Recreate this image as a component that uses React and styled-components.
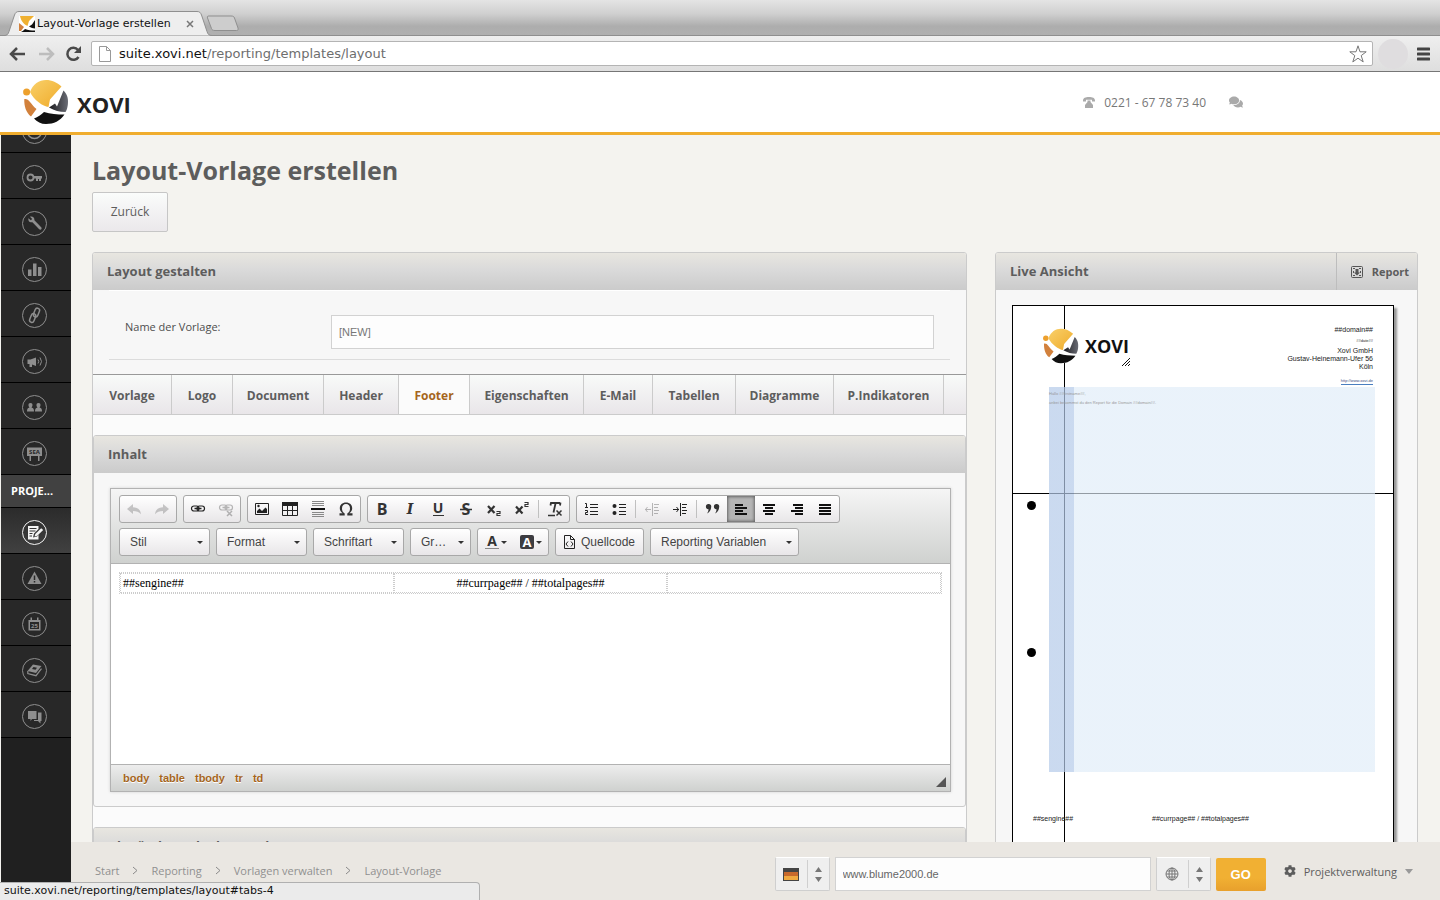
import styled, { createGlobalStyle, css } from "styled-components";
import { FaComments, FaCog } from "react-icons/fa";

const GlobalStyle = createGlobalStyle`
  * {
    box-sizing: border-box;
  }
  body {
    margin: 0;
    font-family: "Open Sans", "Noto Sans", sans-serif;
    font-size: 11px;
    color: #5d5d5d;
    background: #f4f3ef;
  }
  button, input, select {
    font-family: inherit;
    margin: 0;
    outline: none;
  }
  a {
    color: inherit;
    text-decoration: none;
  }
`;

const ui = `"DejaVu Sans", "Noto Sans", sans-serif`;
const arial = `"Liberation Sans", Arial, sans-serif`;

const Window = styled.div`
  position: relative;
  display: flex;
  flex-direction: column;
  height: 100vh;
  overflow: hidden;
`;

/* browser chrome */

const TabStrip = styled.div`
  display: flex;
  align-items: flex-end;
  height: 36px;
  flex: none;
  padding-left: 4px;
  background: linear-gradient(#e4e4e4, #cfcfcf 40%, #adadad 75%, #b0b0b0);
  border-bottom: 1px solid #8f8f8f;
  font-family: ${ui};
`;

const BrowserTab = styled.div`
  position: relative;
  display: flex;
  align-items: center;
  width: 206px;
  height: 25px;
  margin-bottom: -1px;
  padding: 0 14px 0 15px;
  color: #111;
  font-size: 11px;
`;

const TabShape = styled.svg`
  position: absolute;
  left: 0;
  top: 0;
`;

const TabLabel = styled.span`
  position: relative;
  flex: 1;
  padding-left: 2px;
  white-space: nowrap;
`;

const TabIcon = styled.svg`
  position: relative;
`;

const TabClose = styled.button`
  position: relative;
  display: flex;
  padding: 0;
  margin-right: 2px;
  border: none;
  background: none;
`;

const AddTab = styled.button`
  display: flex;
  height: 20px;
  margin-left: -4px;
  padding: 0;
  border: none;
  background: none;
`;

const NavBar = styled.div`
  display: flex;
  align-items: center;
  gap: 9px;
  flex: none;
  height: 36px;
  padding: 0 10px 0 8px;
  background: linear-gradient(#efefef, #dedede);
  border-bottom: 1px solid #767676;
`;

const NavButton = styled.button`
  display: flex;
  padding: 0;
  margin-right: ${(p) => p.$gap || 0}px;
  border: none;
  background: none;
`;

const UrlBox = styled.div`
  display: flex;
  align-items: center;
  flex: 1;
  height: 25px;
  padding: 0 5px 0 7px;
  background: #fff;
  border: 1px solid #b4b4b4;
  border-radius: 2px;
  font-family: ${ui};
  font-size: 13px;
  color: #6e6e6e;
`;

const UrlText = styled.span`
  flex: 1;
  padding-left: 8px;

  b {
    color: #111;
    font-weight: normal;
  }
`;

const Avatar = styled.div`
  width: 30px;
  height: 30px;
  margin-left: -4px;
  border-radius: 50%;
  background: #dfdddf;
`;

const StatusBubble = styled.div`
  position: absolute;
  left: 0;
  bottom: 0;
  width: 480px;
  height: 18px;
  padding: 0 4px;
  background: #ebebeb;
  border: 1px solid #b0b0b0;
  border-bottom: none;
  border-left: none;
  border-radius: 0 4px 0 0;
  color: #111;
  font-family: ${ui};
  font-size: 11px;
  line-height: 16px;
`;

/* header of the suite */

const Header = styled.header`
  display: flex;
  align-items: center;
  justify-content: space-between;
  flex: none;
  height: 63px;
  padding: 0 197px 0 23px;
  background: #fff;
  border-bottom: 3px solid #f0ad2e;
`;

const Brand = styled.a`
  display: flex;
  align-items: center;
  gap: 8px;
  color: #222;
  font-size: 22px;
  font-weight: bold;
  line-height: 30px;
`;

const Wordmark = styled.span`
  padding-top: 4px;
`;

const Contact = styled.div`
  display: flex;
  align-items: center;
  gap: 9px;
  color: #777;
  font-size: 12px;

  a + svg {
    margin-left: 14px;
  }
`;

const Body = styled.div`
  display: flex;
  flex: 1;
  min-height: 0;
`;

/* sidebar */

const Sidebar = styled.nav`
  width: 71px;
  flex: none;
  overflow: hidden;
  background: #202020;
  border-left: 1px solid #f4f3ef;
`;

const SideList = styled.div`
  margin-top: -28px;
`;

const SideItem = styled.a`
  display: flex;
  align-items: center;
  height: 46px;
  padding: 4px 0 0 20px;
  background: ${(p) => (p.$active ? "linear-gradient(#2b2b2b, #414141)" : "#282828")};
  border-bottom: 1px solid #000;
  color: ${(p) => (p.$active ? "#f4f4f4" : "#8e8e8e")};
`;

const SideLabel = styled.div`
  height: 33px;
  padding-left: 10px;
  background: #414141;
  border-bottom: 1px solid #000;
  color: #fff;
  font-size: 11px;
  font-weight: bold;
  line-height: 32px;
`;

/* main column */

const Main = styled.div`
  display: flex;
  flex-direction: column;
  flex: 1;
  min-width: 0;
`;

const Content = styled.main`
  flex: 1;
  min-height: 0;
  overflow: hidden;
  padding: 17px 22px 0 21px;
  background: #f4f3ef;
`;

const Title = styled.h1`
  margin: 0 0 4px;
  color: #5d5d5d;
  font-size: 25px;
  line-height: 36px;
`;

const BackButton = styled.button`
  width: 76px;
  height: 40px;
  padding-bottom: 2px;
  border: 1px solid #c6c6c6;
  border-radius: 2px;
  background: linear-gradient(#fafcfb, #ebe8eb);
  color: #5d5d5d;
  font-size: 12px;
`;

const Columns = styled.div`
  display: grid;
  grid-template-columns: minmax(0, 875fr) minmax(0, 423fr);
  align-items: start;
  gap: 28px;
  margin-top: 20px;
`;

const Panel = styled.section`
  border: 1px solid #cbcbcb;
  border-radius: 3px;
  background: ${(p) => (p.$light ? "#fbfbfb" : "#f7f7f7")};
  margin-bottom: ${(p) => (p.$nested ? 20 : 0)}px;
`;

const PanelHead = styled.div`
  display: flex;
  align-items: stretch;
  justify-content: space-between;
  height: 37px;
  padding-left: 14px;
  background: linear-gradient(#e8e6e0, #dadada 45%, #cbcbcb);
  border-radius: 2px 2px 0 0;
`;

const PanelTitle = styled.h2`
  margin: 0;
  font-size: 13px;
  font-weight: bold;
  line-height: 36px;
  white-space: nowrap;
`;

const ReportButton = styled.button`
  display: flex;
  align-items: center;
  gap: 9px;
  padding: 0 8px 0 14px;
  border: none;
  border-left: 1px solid #bdbdbd;
  background: none;
  color: #5d5d5d;
  font-size: 11px;
  font-weight: bold;
`;

const NameRow = styled.div`
  display: grid;
  grid-template-columns: 206px 1fr;
  margin: 0 16px;
  padding: 24px 16px 10px;
  border-top: 1px solid #fff;
  border-bottom: 1px solid #dcdcdc;
  background: #f7f7f7;

  label {
    font-size: 11px;
    line-height: 24px;
    color: #4e4e4e;
  }
`;

const NameInput = styled.input`
  height: 34px;
  padding: 0 7px;
  border: 1px solid #d2d2d2;
  background: #fdfdfd;
  color: #777;
  font-family: ${arial};
  font-size: 11px;
`;

const FormArea = styled.div`
  padding-bottom: 14px;
  background: #f7f7f7;
`;

const Tabs = styled.div`
  display: flex;
  height: 41px;
  border-top: 1px solid #999;
  border-bottom: 1px solid #cbcbcb;
  background: linear-gradient(#f8faf9, #e9e6e9);
`;

const Tab = styled.button`
  width: ${(p) => p.$width}px;
  padding: 2px 0 0;
  border: none;
  border-right: 1px solid #cbcbcb;
  background: none;
  color: #5d5d5d;
  font-size: 12px;
  font-weight: bold;
  white-space: nowrap;
  ${(p) =>
    p.$active &&
    css`
      background: #fbfbfb;
      color: #a5651c;
    `}
`;

const TabBody = styled.div`
  padding-top: 20px;
`;

/* rich text editor */

const Editor = styled.div`
  margin: 15px 14px 14px 16px;
  border: 1px solid #b2b2b2;
  background: #fff;
  box-shadow: 0 0 3px rgba(0, 0, 0, 0.15);
  font-family: ${arial};
`;

const EditorBar = styled.div`
  display: flex;
  flex-direction: column;
  gap: 5px;
  height: 75px;
  padding: 6px 8px;
  border-bottom: 1px solid #b2b2b2;
  background: linear-gradient(#f5f5f5, #cfd1cf);
`;

const BarRow = styled.div`
  display: flex;
  gap: 6px;
`;

const group = css`
  height: 28px;
  border: 1px solid #a8a8a8;
  border-radius: 3px;
  background: linear-gradient(#fff, #e8e6e8);
`;

const Group = styled.div`
  ${group}
  display: flex;
  align-items: center;
`;

const Tool = styled.button`
  display: flex;
  align-items: center;
  justify-content: center;
  width: ${(p) => p.$width || 28}px;
  height: 26px;
  padding: 0;
  border: none;
  background: none;
  color: #222;
  opacity: ${(p) => (p.disabled ? 0.3 : 1)};
  ${(p) =>
    p.$on &&
    css`
      background: #b5b5b5;
      box-shadow: inset 0 0 3px 1px rgba(0, 0, 0, 0.45);
    `}
`;

const Separator = styled.span`
  width: 1px;
  height: 18px;
  margin: 0 2px;
  background: #c0c0c0;
`;

const Combo = styled.div`
  ${group}
  position: relative;
  width: ${(p) => p.$width}px;

  select {
    width: 100%;
    height: 26px;
    padding: 0 20px 0 10px;
    border: none;
    appearance: none;
    background: none;
    color: #444;
    font-family: ${arial};
    font-size: 12px;
  }
`;

const ComboCaret = styled.svg`
  position: absolute;
  right: 6px;
  top: 12px;
  pointer-events: none;
`;

const SourceButton = styled.button`
  ${group}
  display: flex;
  align-items: center;
  gap: 4px;
  width: 89px;
  padding: 0 5px;
  color: #444;
  font-family: ${arial};
  font-size: 12px;
`;

const EditArea = styled.div`
  height: 200px;
  padding: 8px;
`;

const DocTable = styled.table`
  width: 100%;
  table-layout: fixed;
  border: 1px dotted #ccc;
  border-spacing: 0;
  color: #000;
  font-family: "Liberation Serif", "Times New Roman", serif;
  font-size: 12px;
  line-height: 16px;

  td {
    height: 20px;
    padding: 1px 2px;
    border: 1px dotted #ccc;
  }
  td:nth-child(2) {
    text-align: center;
  }
`;

const PathBar = styled.div`
  display: flex;
  align-items: center;
  gap: 10px;
  height: 27px;
  padding: 0 4px 0 12px;
  border-top: 1px solid #b2b2b2;
  background: linear-gradient(#ededed, #cfd1cf);
  color: #a5651c;
  font-size: 11px;
  font-weight: bold;
  text-shadow: 0 1px 0 #fff;

  svg {
    margin-left: auto;
    align-self: flex-end;
    margin-bottom: 4px;
  }
`;

/* live preview: a free canvas, the parts sit where the template puts them */

const Sheet = styled.div`
  position: relative;
  height: 600px;
  margin: 15px 23px 0 16px;
  border: 1px solid #000;
  background: #fff;
  box-shadow: 3px 3px 2px #999;
  color: #222;
  font-family: ${arial};
  font-size: 7px;
  line-height: 8px;
`;

const Guide = styled.div`
  position: absolute;
  background: #000;
  ${(p) =>
    p.$vertical
      ? css`
          left: 51px;
          top: 0;
          bottom: 0;
          width: 1px;
        `
      : css`
          top: 187px;
          left: 0;
          right: 0;
          height: 1px;
        `}
`;

const SheetLogo = styled.div`
  position: absolute;
  left: 30px;
  top: 21px;
  display: flex;
  align-items: center;
  gap: 6px;
  color: #111;
  font-family: "Open Sans", sans-serif;
  font-size: 18px;
  font-weight: bold;
  line-height: 38px;
`;

const SheetGrip = styled.svg`
  position: absolute;
  left: 109px;
  top: 52px;
`;

const Address = styled.address`
  position: absolute;
  right: 20px;
  top: 20px;
  font-style: normal;
  text-align: right;

  p {
    margin: 0;
  }
  small {
    display: block;
    font-size: 4px;
    line-height: 13px;
  }
  a {
    display: inline-block;
    margin-top: 6px;
    border-bottom: 1px solid #4a7fc0;
    color: #3a4a80;
    font-size: 4px;
    line-height: 7px;
  }
`;

const BodyZone = styled.div`
  position: absolute;
  left: 36px;
  right: 18px;
  top: 81px;
  height: 385px;
  padding-top: 2px;
  background: linear-gradient(
    to right,
    rgba(180, 202, 233, 0.7) 25px,
    rgba(223, 236, 248, 0.66) 25px
  );
  color: #999;
  font-size: 4px;
  line-height: 9px;

  p {
    margin: 0;
  }
`;

const PunchHole = styled.div`
  position: absolute;
  left: 14px;
  top: ${(p) => p.$top}px;
  width: 9px;
  height: 9px;
  border-radius: 50%;
  background: #000;
`;

const FooterField = styled.div`
  position: absolute;
  left: ${(p) => p.$left}px;
  top: 509px;
`;

/* footer */

const Footer = styled.footer`
  display: flex;
  align-items: center;
  justify-content: space-between;
  flex: none;
  height: 58px;
  padding: 0 27px 0 24px;
  background: #eae7e2;
`;

const Crumbs = styled.nav`
  display: flex;
  align-items: center;
  gap: 13px;
  padding-bottom: 2px;
  color: #909090;
  font-size: 11px;
`;

const Project = styled.form`
  display: flex;
  align-items: center;
  gap: 5px;
  padding-top: 6px;
`;

const IconSelect = styled.label`
  position: relative;
  display: flex;
  align-items: center;
  width: 55px;
  height: 34px;
  border: 1px solid #cfcfcf;
  border-top-color: #fff;
  border-radius: 2px;
  background: #efefef;
  color: #777;

  select {
    position: absolute;
    inset: 0;
    opacity: 0;
  }
`;

const IconCell = styled.span`
  display: flex;
  align-items: center;
  justify-content: center;
  flex: 1;
  height: 28px;
  border-right: 1px solid #cfcfcf;
`;

const ArrowCell = styled.span`
  display: flex;
  justify-content: center;
  width: 21px;
`;

const DomainInput = styled.input`
  width: 316px;
  height: 34px;
  padding: 0 7px;
  border: 1px solid #d2d2d2;
  background: #fdfdfd;
  color: #666;
  font-family: ${arial};
  font-size: 11px;
`;

const GoButton = styled.button`
  width: 50px;
  height: 33px;
  border: none;
  border-radius: 2px;
  background: linear-gradient(#f1b033 60%, #e8a02c);
  color: #fff;
  font-family: ${arial};
  font-size: 13px;
  font-weight: bold;
`;

const ManageButton = styled.button`
  display: flex;
  align-items: center;
  gap: 8px;
  margin-left: 13px;
  padding: 0 0 6px;
  border: none;
  background: none;
  color: #5d5d5d;
  font-size: 11px;
`;

const Globe = ({ size, flat }) => (
  <svg width={size} height={size} viewBox="0 0 46 46">
    <defs>
      <linearGradient id="sun" x1="0" y1="0" x2="1" y2="1">
        <stop offset="0" stopColor="#f9d06a" />
        <stop offset="1" stopColor="#efab2a" />
      </linearGradient>
      <linearGradient id="steel" x1="0" y1="0" x2="1" y2="0">
        <stop offset="0" stopColor="#1d1d20" />
        <stop offset="1" stopColor={flat ? "#6b5450" : "#6a6c75"} />
      </linearGradient>
    </defs>
    <circle cx="23" cy="23" r="22" fill="#fff" />
    <circle cx="3.6" cy="13" r="3.5" fill="#eda02d" />
    <path d="M7 13C10 5 16 1 23 1c6 0 11 2.500 15.500 6.500L27 20.500l-1.500 7.500C20 27.500 11 21 7 13z" fill="url(#sun)" />
    <path d="M1.300 20c2-.5 4 .5 5.700 3 2 2.500 4 5 6.500 7l-5.500 7.500C3 33.500 1 27 1.300 20z" fill="#d2813c" />
    <path d="M40.500 11.500C45 16 45.500 21 44.800 26c-.4 3-1 5-2.300 7-6 0-11-1.500-16.500-4.500l6-4 2 3z" fill="url(#steel)" />
    <path d="M11 39.500c4-1.500 7-3.500 10-6.500 6.500 2 13 2.500 20.500 2.500C37 42 31 45 23 45c-5 0-9-2-12-5.500z" fill="#111" />
  </svg>
);

const Ring = ({ children }) => (
  <svg width="27" height="27" viewBox="0 0 27 27" fill="none">
    <circle cx="13.500" cy="13.500" r="12" stroke="currentColor" strokeWidth="1" />
    {children}
  </svg>
);

const f = { fill: "currentColor" };
const s = { stroke: "currentColor", strokeWidth: 1.500 };

const sideIcons = {
  gauge: <circle cx="13.500" cy="13.500" r="7" {...s} />,
  key: (
    <>
      <circle cx="9.500" cy="13.500" r="3" {...s} strokeWidth="1.800" />
      <path d="M13 12h8v2.500h-1V17h-2v-2h-1v2h-2v-2.500h-2z" {...f} />
    </>
  ),
  wrench: (
    <path d="M7.500 8.200l2.300 2 1.400-1.200-2.200-2.300c2.500-.8 4.800 1 4.400 3.600l6.800 7c1.300 1.500-.6 3.300-2 2l-6.800-7.100c-2.500.7-4.700-1.400-3.900-4z" {...f} />
  ),
  bars: <path d="M7 13.500h3.500V20H7zM12 7.500h3.500V20H12zM17 11h3.500v9H17z" {...f} />,
  link: (
    <g transform="rotate(22 13.500 13.500)" {...s}>
      <rect x="12" y="5.500" width="4.500" height="9" rx="2.200" />
      <rect x="10.500" y="12" width="4.500" height="9" rx="2.200" />
    </g>
  ),
  horn: (
    <>
      <path d="M6.500 11.500h3L15 9.500v8.500l-4-1.500V19H8.500v-3h-2z" {...f} />
      <path d="M17 11.500q1.500 2 0 4M19 9.500q3 4 0 8" {...s} strokeWidth="1" />
    </>
  ),
  people: (
    <>
      <path d="M9.500 9c3 0 2 3.500 1 4.500 2 .5 2.500 1.500 2.500 4H6c0-2.500.5-3.500 2.500-4C7.500 12.500 6.500 9 9.500 9z" {...f} />
      <path d="M17.500 9c3 0 2 3.500 1 4.500 2 .5 2.500 1.500 2.500 4h-7c0-2.500.5-3.500 2.500-4-1-1-2-4.500 1-4.500z" {...f} />
    </>
  ),
  sea: (
    <>
      <path d="M6 7.500h15v8.500H6z M8.500 16h1.500v5H8.500zM17 16h1.500v5H17z" {...f} />
      <text x="13.500" y="14.200" textAnchor="middle" fontSize="6" fontWeight="bold" fill="#282828">SEA</text>
    </>
  ),
  report: (
    <>
      <path d="M7 7h10.500v3L13 14.500 12 18.500l4-1 1.500-1.500v4.500H7z" {...f} />
      <path d="M8.500 9.500h7M8.500 12h6M8.500 14.500h3M8.500 17h2.500" stroke="#333" />
      <path d="M13.500 17.500l.8-2.600 5.900-5.700 2 1.900-5.900 5.700z" {...f} />
    </>
  ),
  warning: (
    <>
      <path d="M13.500 6.500L20.500 19h-14z" {...f} />
      <path d="M13.500 10.500v4.500M13.500 16v1.500" stroke="#282828" strokeWidth="1.500" />
    </>
  ),
  calendar: (
    <>
      <path d="M7.500 9h12v10.500h-12zM9.500 6.500H11V9H9.500zM16 6.500h1.500V9H16z" {...f} />
      <path d="M9 11h9v7H9z" fill="#282828" />
      <text x="13.500" y="17" textAnchor="middle" fontSize="6" fontWeight="bold" {...f}>25</text>
    </>
  ),
  book: (
    <>
      <path d="M12 7.500l8.500 1.500-5.500 7-8.500-2z" {...f} />
      <path d="M6.800 14v2.500l8.200 2.200 5.500-7" {...s} strokeWidth="1.200" />
      <path d="M12.500 10l3.500.7-1.500 2-3.500-.7z" fill="#282828" />
    </>
  ),
  chat: (
    <>
      <path d="M7 8h8.500v8H11l-1.500 2V16H7z" {...f} />
      <path d="M17 9.500h3.500v8.500h-1v2.500L17 18h-4v-1h4z" {...f} />
    </>
  ),
};

const topItems = ["gauge", "key", "wrench", "bars", "link", "horn", "people", "sea"];
const projectItems = ["report", "warning", "calendar", "book", "chat"];

const tabs = [
  ["Vorlage", 79],
  ["Logo", 61],
  ["Document", 91],
  ["Header", 75],
  ["Footer", 71],
  ["Eigenschaften", 114],
  ["E-Mail", 69],
  ["Tabellen", 83],
  ["Diagramme", 98],
  ["P.Indikatoren", 110],
];

const Glyph = ({ children, width = 16 }) => (
  <svg width={width} height="16" viewBox={`0 0 ${width} 16`} fill="none" overflow="visible">
    {children}
  </svg>
);

const letter = { fill: "#333", fontFamily: "Open Sans", fontWeight: "bold", textAnchor: "middle" };

const glyphs = {
  undo: <path d="M1 8l6-5v3.200c4 0 7.500 2 8 7-2-2.500-4.500-3.200-8-3.200v3z" fill="#555" />,
  redo: <path d="M15 8L9 3v3.200c-4 0-7.500 2-8 7 2-2.500 4.500-3.200 8-3.200v3z" fill="#555" />,
  link: (
    <>
      <rect x="1.500" y="5" width="7.500" height="5" rx="2.500" stroke="#222" strokeWidth="1.200" />
      <rect x="7" y="5" width="7.500" height="5" rx="2.500" stroke="#222" strokeWidth="1.200" />
      <path d="M4.500 7.500h7" stroke="#222" strokeWidth="1.500" />
    </>
  ),
  unlink: (
    <>
      <rect x="1.500" y="4" width="7.500" height="5" rx="2.500" stroke="#222" strokeWidth="1.200" />
      <rect x="7" y="4" width="7.500" height="5" rx="2.500" stroke="#222" strokeWidth="1.200" />
      <path d="M4.500 6.500h7M9 10l5 5M14 10l-5 5" stroke="#222" strokeWidth="1.500" />
    </>
  ),
  image: (
    <>
      <path d="M1.500 2.500h13v11h-13z" stroke="#222" />
      <path d="M3 12V10l2.500-2.500L8 10l3.500-3.500L13 8v4z" fill="#222" />
      <circle cx="4.500" cy="5" r="1.200" fill="#222" />
    </>
  ),
  table: (
    <>
      <path d="M0 1h16v4H0z" fill="#222" />
      <path d="M.5 2v12.500h15V2M.5 9.500h15M5.500 4v10M10.500 4v10" stroke="#222" />
    </>
  ),
  rule: (
    <>
      <path d="M2 .5h12M2 2.500h12M2 4.500h12M2 11.500h12M2 13.500h12M2 15.500h12" stroke="#888" />
      <path d="M1 8h14" stroke="#111" strokeWidth="2" />
    </>
  ),
  omega: (
    <path d="M1.500 14.500v-2.200h3.200C2.800 11 1.800 9.300 1.800 7.200 1.800 3.800 4.300 1.500 8 1.500s6.200 2.300 6.200 5.700c0 2.100-1 3.800-2.900 5.100h3.200v2.200H9.300v-2c1.900-1.200 2.700-2.900 2.700-5.100C12 4.600 10.500 2.900 8 2.900S4 4.600 4 7.400c0 2.200.8 3.900 2.700 5.100v2z" fill="#333" />
  ),
  bold: <text x="8" y="14" {...letter} fontSize="16">B</text>,
  italic: <text x="8" y="13" {...letter} fontFamily="DejaVu Serif" fontStyle="italic" fontSize="14">I</text>,
  underline: (
    <>
      <text x="8" y="12" {...letter} fontSize="14">U</text>
      <path d="M3 14.500h11" stroke="#333" />
    </>
  ),
  strike: (
    <>
      <text x="8" y="14" {...letter} fontSize="16">S</text>
      <path d="M2 8.500h12" stroke="#333" strokeWidth="1.500" />
    </>
  ),
  sub: (
    <>
      <path d="M2 5l6.500 7M8.500 5L2 12" stroke="#333" strokeWidth="2.200" />
      <path d="M10.500 10.500h3.500v2h-3v2h3.500" stroke="#333" strokeWidth="1.200" />
    </>
  ),
  sup: (
    <>
      <path d="M2 5.500l6.500 7M8.500 5.500L2 12.500" stroke="#333" strokeWidth="2.200" />
      <path d="M10.500 1.500h3.500v2h-3v2h3.500" stroke="#333" strokeWidth="1.200" />
    </>
  ),
  clear: (
    <>
      <path d="M3.500 2h9.500M8.500 2.500l-2 9M4 1.500L3.500 4.500M13.500 1.500L13 4.500" stroke="#333" strokeWidth="1.800" />
      <path d="M1 14.500h7M9.500 9.500l5 5M14.500 9.500l-5 5" stroke="#333" strokeWidth="1.500" />
    </>
  ),
  ol: (
    <>
      <path d="M7 3.500h8M7 6.500h8M7 10.500h8M7 13.500h8" stroke="#222" />
      <path d="M2 2.500h1.500V6.500M2 6.500h3M2 9.500h2.500v2H2.500v2H5" stroke="#222" />
    </>
  ),
  ul: (
    <>
      <path d="M8 3.500h7M8 6.500h7M8 10.500h7M8 13.500h7" stroke="#222" />
      <circle cx="3.500" cy="5" r="2" fill="#222" />
      <circle cx="3.500" cy="12" r="2" fill="#222" />
    </>
  ),
  outdent: (
    <path d="M8.500 2v13M10 3.500h5M10 6.500h4M10 9.500h5M10 12.500h4M1 8.500h6M3.500 6L1.500 8.500l2 2.500" stroke="#222" />
  ),
  indent: (
    <path d="M8.500 2v13M10 3.500h5M10 6.500h4M10 9.500h5M10 12.500h4M1 8.500h6M4.500 6l2 2.500-2 2.500" stroke="#222" />
  ),
  quote: (
    <path d="M3.500 3a2.500 2.500 0 0 1 2.700 3C6 9.500 4 11.500 2 12.500c1-1.500 1.500-2.800 1.500-4.300A2.600 2.600 0 0 1 3.500 3zM11.500 3a2.500 2.500 0 0 1 2.700 3c-.2 3.500-2.200 5.500-4.200 6.500 1-1.500 1.500-2.800 1.500-4.300a2.600 2.600 0 0 1 0-5.200z" fill="#333" />
  ),
  left: <path d="M2 4h8M2 7h12M2 10h8M2 13h12" stroke="#111" strokeWidth="2" />,
  center: <path d="M2 4h12M4 7h8M2 10h12M4 13h8" stroke="#111" strokeWidth="2" />,
  right: <path d="M4 4h10M6 7h8M2 10h12M6 13h8" stroke="#111" strokeWidth="2" />,
  justify: <path d="M2 4h12M2 7h12M2 10h12M2 13h12" stroke="#111" strokeWidth="2" />,
};

const toolGroups = [
  ["undo", "redo"],
  ["link", "unlink"],
  ["image", "table", "rule", "omega"],
  ["bold", "italic", "underline", "strike", "sub", "sup", "|", "clear"],
  ["ol", "ul", "|", "outdent", "indent", "|", "quote", "left", "center", "right", "justify"],
];

const disabledTools = ["undo", "redo", "unlink", "outdent"];

const Select = ({ label, width }) => (
  <Combo $width={width}>
    <select aria-label={label}>
      <option>{label}</option>
    </select>
    <ComboCaret width="6" height="3" viewBox="0 0 6 3">
      <path d="M0 0h6L3 3z" fill="#333" />
    </ComboCaret>
  </Combo>
);

const UpDown = () => (
  <ArrowCell>
    <svg width="7" height="15" viewBox="0 0 7 15">
      <path d="M3.500 0L7 5H0zM3.500 15L7 10H0z" fill="#777" />
    </svg>
  </ArrowCell>
);

const Chevron = () => (
  <svg width="6" height="9" viewBox="0 0 6 9">
    <path d="M1 1l4 3.500L1 8" fill="none" stroke="#8a8a8a" />
  </svg>
);

const Browser = () => (
  <>
    <TabStrip>
      <BrowserTab>
        <TabShape width="208" height="25" viewBox="0 0 208 25">
          <path d="M0 24.500c3 0 4-1 5-4L10.500 4C11.500 1.500 12.500.5 15 .5h178c2.500 0 3.500 1 4.500 3.500L203 20.500c1 3 2 4 5 4" fill="#eee" stroke="#8f8f8f" />
        </TabShape>
        <TabIcon width="16" height="16" viewBox="0 0 16 16">
          <path d="M0 0h16v16H0z" fill="#fff" />
          <path d="M1 0h14l-5 5-1.500 5C5 8.500 2 5 1 0z" fill="#efb030" />
          <path d="M0 7l5 4-3 4H0z" fill="#d2813c" />
          <path d="M16 4v8.500c-2 0-4-1-6-2l3-2zM2 16c2-1 3-2 4-3 3 1 6 1.500 10 1.500V16z" fill="#111" />
        </TabIcon>
        <TabLabel>Layout-Vorlage erstellen</TabLabel>
        <TabClose aria-label="Tab schließen">
          <svg width="8" height="8" viewBox="0 0 8 8">
            <path d="M1 1l6 6M7 1L1 7" stroke="#777" strokeWidth="1.500" />
          </svg>
        </TabClose>
      </BrowserTab>
      <AddTab aria-label="Neuer Tab">
        <svg width="33" height="17" viewBox="0 0 33 17">
          <path d="M3 1h22c2 0 3 .5 3.500 2L32 13c.5 1.500 0 2.500-1.500 2.500H9c-2 0-3-.5-3.500-2L1.500 3C1 1.500 1.500 1 3 1z" fill="#cdcdcd" stroke="#8f8f8f" />
        </svg>
      </AddTab>
    </TabStrip>
    <NavBar>
      <NavButton aria-label="Zurück" $gap={3}>
        <svg width="18" height="16" viewBox="0 0 18 16">
          <path d="M17 8H3M9 2L3 8l6 6" fill="none" stroke="#4a4a4a" strokeWidth="2.500" />
        </svg>
      </NavButton>
      <NavButton aria-label="Vorwärts">
        <svg width="18" height="16" viewBox="0 0 18 16">
          <path d="M1 8h14M9 2l6 6-6 6" fill="none" stroke="#bdbdbd" strokeWidth="2.500" />
        </svg>
      </NavButton>
      <NavButton aria-label="Neu laden">
        <svg width="17" height="16" viewBox="0 0 17 16">
          <path d="M13.500 11a6 6 0 1 1-.5-7" fill="none" stroke="#4a4a4a" strokeWidth="2.500" />
          <path d="M16 0v7H9z" fill="#4a4a4a" />
        </svg>
      </NavButton>
      <UrlBox>
        <svg width="12" height="16" viewBox="0 0 12 16">
          <path d="M.5.500h7l4 4v11H.5zM7.500.500v4h4" fill="#fff" stroke="#999" />
        </svg>
        <UrlText>
          <b>suite.xovi.net</b>/reporting/templates/layout
        </UrlText>
        <svg width="18" height="18" viewBox="0 0 18 18">
          <path d="M9 .8l2 6h6.200l-5 3.800 2 6.300L9 13.200l-5.200 3.700 2-6.300-5-3.800H7z" fill="#fff" stroke="#777" />
        </svg>
      </UrlBox>
      <Avatar />
      <NavButton aria-label="Menü">
        <svg width="13" height="14" viewBox="0 0 13 14">
          <path d="M1 2h11M1 7h11M1 12h11" stroke="#444" strokeWidth="3" strokeLinecap="round" />
        </svg>
      </NavButton>
    </NavBar>
  </>
);

const LayoutEditor = () => (
  <Editor>
    <EditorBar>
      <BarRow>
        {toolGroups.map((tools, i) => (
          <Group key={i}>
            {tools.map((name, j) =>
              name === "|" ? (
                <Separator key={j} />
              ) : (
                <Tool key={j} aria-label={name} $on={name === "left"} disabled={disabledTools.includes(name)}>
                  <Glyph>{glyphs[name]}</Glyph>
                </Tool>
              )
            )}
          </Group>
        ))}
      </BarRow>
      <BarRow>
        <Select label="Stil" width={91} />
        <Select label="Format" width={91} />
        <Select label="Schriftart" width={91} />
        <Select label="Gr…" width={61} />
        <Group>
          <Tool $width={35} aria-label="Textfarbe">
            <Glyph width={24}>
              <text x="8" y="12" {...letter} fontSize="14">A</text>
              <path d="M1 14.500h14" stroke="#888" />
              <path d="M17 7h6l-3 3z" fill="#333" />
            </Glyph>
          </Tool>
          <Tool $width={35} aria-label="Hintergrundfarbe">
            <Glyph width={24}>
              <rect x="1" y="1" width="14" height="14" rx="2" fill="#3c3c40" />
              <text x="8" y="13" {...letter} fontSize="13" fill="#fff">A</text>
              <path d="M17 7h6l-3 3z" fill="#333" />
            </Glyph>
          </Tool>
        </Group>
        <SourceButton>
          <Glyph>
            <path d="M3.500 1.500h6l4 4v9h-10zM9.500 1.500v4h4" stroke="#222" />
            <path d="M7 7.500L5 10l2 2.500M10 7.500l2 2.500-2 2.500" stroke="#222" />
          </Glyph>
          Quellcode
        </SourceButton>
        <Select label="Reporting Variablen" width={149} />
      </BarRow>
    </EditorBar>
    <EditArea>
      <DocTable>
        <tbody>
          <tr>
            <td>##sengine##</td>
            <td>##currpage## / ##totalpages##</td>
            <td />
          </tr>
        </tbody>
      </DocTable>
    </EditArea>
    <PathBar>
      {["body", "table", "tbody", "tr", "td"].map((tag) => (
        <a key={tag} href="#path">{tag}</a>
      ))}
      <svg width="10" height="10" viewBox="0 0 10 10">
        <path d="M10 0v10H0z" fill="#555" />
      </svg>
    </PathBar>
  </Editor>
);

const Preview = () => (
  <Panel>
    <PanelHead>
      <PanelTitle>Live Ansicht</PanelTitle>
      <ReportButton>
        <svg width="12" height="12" viewBox="0 0 12 12" fill="none">
          <rect x="0.500" y="0.500" width="11" height="11" rx="1" stroke="#555" />
          <path d="M2 2.500h2M8 2.500h2M2 9.500h2M8 9.500h2M2.500 5v2M9.500 5v2" stroke="#555" />
          <path d="M4.500 3v3.500H3L6 9.500l3-3H7.500V3z" fill="#555" />
        </svg>
        Report
      </ReportButton>
    </PanelHead>
    <Sheet>
      <Guide $vertical />
      <Guide />
      <SheetLogo>
        <Globe size={36} flat />
        XOVI
      </SheetLogo>
      <SheetGrip width="8" height="8" viewBox="0 0 8 8">
        <path d="M0 8l8-8M3 8l5-5M6 8l2-2" stroke="#111" />
      </SheetGrip>
      <Address>
        <p>##domain##</p>
        <small>##date##</small>
        <p>Xovi GmbH</p>
        <p>Gustav-Heinemann-Ufer 56</p>
        <p>Köln</p>
        <a href="#xovi">http://www.xovi.de</a>
      </Address>
      <BodyZone>
        <p>Hallo ##firstname##,</p>
        <p>anbei bekommst du den Report für die Domain ##domain##.</p>
      </BodyZone>
      <PunchHole $top={195} />
      <PunchHole $top={342} />
      <FooterField $left={20}>##sengine##</FooterField>
      <FooterField $left={139}>##currpage## / ##totalpages##</FooterField>
    </Sheet>
  </Panel>
);

const App = () => {
  return (
    <Window>
      <GlobalStyle />
      <Browser />
      <Header>
        <Brand href="#home">
          <Globe size={46} />
          <Wordmark>XOVI</Wordmark>
        </Brand>
        <Contact>
          <svg width="12" height="11" viewBox="0 0 12 11" fill="#aaa">
            <path d="M0 3.500C0 1 2.500 0 6 0s6 1 6 3.500V4.500H9V2.800H3V4.500H0zM4.500 3.500h3V5L10 8v3H2V8l2.500-3z" />
          </svg>
          <a href="#tel">0221 - 67 78 73 40</a>
          <FaComments size={14} color="#aaa" />
        </Contact>
      </Header>
      <Body>
        <Sidebar>
          <SideList>
            {topItems.map((name) => (
              <SideItem key={name} href={`#${name}`} aria-label={name}>
                <Ring>{sideIcons[name]}</Ring>
              </SideItem>
            ))}
            <SideLabel>PROJE...</SideLabel>
            {projectItems.map((name) => (
              <SideItem key={name} href={`#${name}`} aria-label={name} $active={name === "report"}>
                <Ring>{sideIcons[name]}</Ring>
              </SideItem>
            ))}
          </SideList>
        </Sidebar>
        <Main>
          <Content>
            <Title>Layout-Vorlage erstellen</Title>
            <BackButton>Zurück</BackButton>
            <Columns>
              <Panel $light>
                <PanelHead>
                  <PanelTitle>Layout gestalten</PanelTitle>
                </PanelHead>
                <FormArea>
                  <NameRow>
                    <label htmlFor="name">Name der Vorlage:</label>
                    <NameInput id="name" defaultValue="[NEW]" />
                  </NameRow>
                </FormArea>
                <Tabs>
                  {tabs.map(([label, width]) => (
                    <Tab key={label} $width={width} $active={label === "Footer"}>
                      {label}
                    </Tab>
                  ))}
                </Tabs>
                <TabBody>
                  <Panel $nested>
                    <PanelHead>
                      <PanelTitle>Inhalt</PanelTitle>
                    </PanelHead>
                    <LayoutEditor />
                  </Panel>
                  <Panel>
                    <PanelHead>
                      <PanelTitle>Abstände nach oben und</PanelTitle>
                    </PanelHead>
                  </Panel>
                </TabBody>
              </Panel>
              <Preview />
            </Columns>
          </Content>
          <Footer>
            <Crumbs>
              <a href="#start">Start</a>
              <Chevron />
              <a href="#reporting">Reporting</a>
              <Chevron />
              <a href="#vorlagen">Vorlagen verwalten</a>
              <Chevron />
              <a href="#layout">Layout-Vorlage</a>
            </Crumbs>
            <Project>
              <IconSelect>
                <IconCell>
                  <svg width="16" height="13" viewBox="0 0 16 13">
                    <path d="M0 0h16v13H0z" fill="#444" />
                    <path d="M1 4h14v4H1z" fill="#c8692c" />
                    <path d="M1 8h14v4H1z" fill="#f0a940" />
                  </svg>
                </IconCell>
                <UpDown />
                <select aria-label="Land">
                  <option>DE</option>
                </select>
              </IconSelect>
              <DomainInput aria-label="Domain" defaultValue="www.blume2000.de" />
              <IconSelect>
                <IconCell>
                  <svg width="14" height="14" viewBox="0 0 14 14" fill="none" stroke="#777">
                    <circle cx="7" cy="7" r="6" />
                    <ellipse cx="7" cy="7" rx="3" ry="6" />
                    <path d="M7 1v12M1 7h12M2 4h10M2 10h10" />
                  </svg>
                </IconCell>
                <UpDown />
                <select aria-label="Bereich">
                  <option>Web</option>
                </select>
              </IconSelect>
              <GoButton type="button">GO</GoButton>
              <ManageButton type="button">
                <FaCog size={12} />
                Projektverwaltung
                <svg width="8" height="5" viewBox="0 0 8 5">
                  <path d="M0 0h8L4 5z" fill="#999" />
                </svg>
              </ManageButton>
            </Project>
          </Footer>
        </Main>
      </Body>
      <StatusBubble>suite.xovi.net/reporting/templates/layout#tabs-4</StatusBubble>
    </Window>
  );
};

export default App;
